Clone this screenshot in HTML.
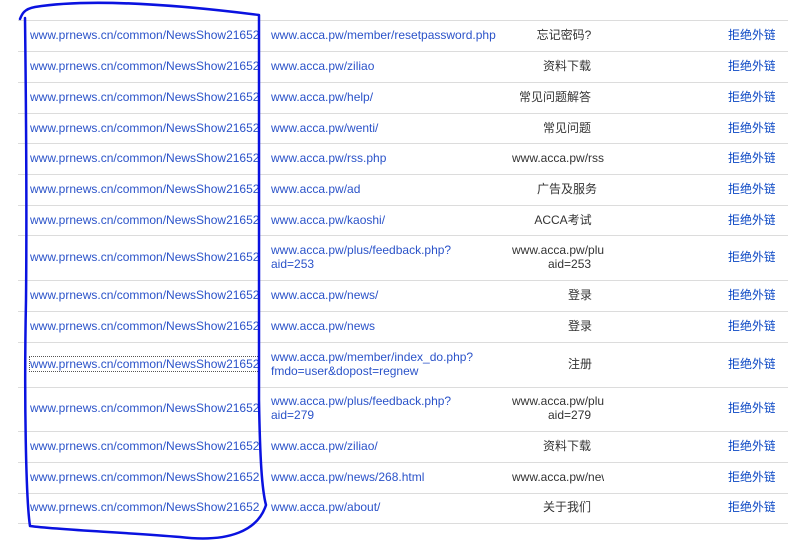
<!DOCTYPE html>
<html><head><meta charset="utf-8"><style>
body{margin:0;width:808px;height:543px;background:#fff;position:relative;overflow:hidden;font-family:"Liberation Sans","Noto Sans CJK SC",sans-serif;font-size:12px}
.l{position:absolute;left:18px;width:770px;height:1px;background:#dcdcdc}
.t{position:absolute;white-space:nowrap;line-height:14px}
.a{color:#2b53c9}
.k{color:#333}
.c3{position:absolute;left:512px;width:92px;overflow:hidden;text-align:center;color:#333;line-height:14px}
.c4{position:absolute;left:728px;width:47px;overflow:hidden;white-space:nowrap;color:#0b47c4;font-size:12px;line-height:14px}
</style></head><body>
<div class="l" style="top:20px"></div><div class="l" style="top:51px"></div><div class="l" style="top:82px"></div><div class="l" style="top:113px"></div><div class="l" style="top:143px"></div><div class="l" style="top:174px"></div><div class="l" style="top:205px"></div><div class="l" style="top:235px"></div><div class="l" style="top:280px"></div><div class="l" style="top:311px"></div><div class="l" style="top:342px"></div><div class="l" style="top:387px"></div><div class="l" style="top:431px"></div><div class="l" style="top:462px"></div><div class="l" style="top:493px"></div><div class="l" style="top:523px"></div>

<div class="t a" style="left:30px;top:28px">www.prnews.cn/common/NewsShow21652</div>
<div class="t a" style="left:30px;top:59px">www.prnews.cn/common/NewsShow21652</div>
<div class="t a" style="left:30px;top:90px">www.prnews.cn/common/NewsShow21652</div>
<div class="t a" style="left:30px;top:121px">www.prnews.cn/common/NewsShow21652</div>
<div class="t a" style="left:30px;top:151px">www.prnews.cn/common/NewsShow21652</div>
<div class="t a" style="left:30px;top:182px">www.prnews.cn/common/NewsShow21652</div>
<div class="t a" style="left:30px;top:213px">www.prnews.cn/common/NewsShow21652</div>
<div class="t a" style="left:30px;top:250px">www.prnews.cn/common/NewsShow21652</div>
<div class="t a" style="left:30px;top:288px">www.prnews.cn/common/NewsShow21652</div>
<div class="t a" style="left:30px;top:319px">www.prnews.cn/common/NewsShow21652</div>
<div class="t a" style="left:30px;top:357px;outline:1px dotted #555">www.prnews.cn/common/NewsShow21652</div>
<div class="t a" style="left:30px;top:401px">www.prnews.cn/common/NewsShow21652</div>
<div class="t a" style="left:30px;top:439px">www.prnews.cn/common/NewsShow21652</div>
<div class="t a" style="left:30px;top:470px">www.prnews.cn/common/NewsShow21652</div>
<div class="t a" style="left:30px;top:500px">www.prnews.cn/common/NewsShow21652</div>

<div class="t a" style="left:271px;top:28px">www.acca.pw/member/resetpassword.php</div>
<div class="t a" style="left:271px;top:59px">www.acca.pw/ziliao</div>
<div class="t a" style="left:271px;top:90px">www.acca.pw/help/</div>
<div class="t a" style="left:271px;top:121px">www.acca.pw/wenti/</div>
<div class="t a" style="left:271px;top:151px">www.acca.pw/rss.php</div>
<div class="t a" style="left:271px;top:182px">www.acca.pw/ad</div>
<div class="t a" style="left:271px;top:213px">www.acca.pw/kaoshi/</div>
<div class="t a" style="left:271px;top:243px">www.acca.pw/plus/feedback.php?<br>aid=253</div>
<div class="t a" style="left:271px;top:288px">www.acca.pw/news/</div>
<div class="t a" style="left:271px;top:319px">www.acca.pw/news</div>
<div class="t a" style="left:271px;top:350px">www.acca.pw/member/index_do.php?<br>fmdo=user&amp;dopost=regnew</div>
<div class="t a" style="left:271px;top:394px">www.acca.pw/plus/feedback.php?<br>aid=279</div>
<div class="t a" style="left:271px;top:439px">www.acca.pw/ziliao/</div>
<div class="t a" style="left:271px;top:470px">www.acca.pw/news/268.html</div>
<div class="t a" style="left:271px;top:500px">www.acca.pw/about/</div>

<div class="c3" style="top:28px;left:518px">忘记密码?</div>
<div class="c3" style="top:59px;left:521px">资料下载</div>
<div class="c3" style="top:90px;left:509px">常见问题解答</div>
<div class="c3" style="top:121px;left:521px">常见问题</div>
<div class="c3" style="top:151px;text-align:left">www.acca.pw/rss</div>
<div class="c3" style="top:182px;left:521px">广告及服务</div>
<div class="c3" style="top:213px;left:517px">ACCA考试</div>
<div class="c3" style="top:243px;white-space:nowrap;text-align:left">www.acca.pw/plu<br><span style="margin-left:36px">aid=253</span></div>
<div class="c3" style="top:288px;left:534px">登录</div>
<div class="c3" style="top:319px;left:534px">登录</div>
<div class="c3" style="top:357px;left:534px">注册</div>
<div class="c3" style="top:394px;white-space:nowrap;text-align:left">www.acca.pw/plu<br><span style="margin-left:36px">aid=279</span></div>
<div class="c3" style="top:439px;left:521px">资料下载</div>
<div class="c3" style="top:470px;white-space:nowrap;text-align:left">www.acca.pw/news</div>
<div class="c3" style="top:500px;left:521px">关于我们</div>

<div class="c4" style="top:28px">拒绝外链</div>
<div class="c4" style="top:59px">拒绝外链</div>
<div class="c4" style="top:90px">拒绝外链</div>
<div class="c4" style="top:121px">拒绝外链</div>
<div class="c4" style="top:151px">拒绝外链</div>
<div class="c4" style="top:182px">拒绝外链</div>
<div class="c4" style="top:213px">拒绝外链</div>
<div class="c4" style="top:250px">拒绝外链</div>
<div class="c4" style="top:288px">拒绝外链</div>
<div class="c4" style="top:319px">拒绝外链</div>
<div class="c4" style="top:357px">拒绝外链</div>
<div class="c4" style="top:401px">拒绝外链</div>
<div class="c4" style="top:439px">拒绝外链</div>
<div class="c4" style="top:470px">拒绝外链</div>
<div class="c4" style="top:500px">拒绝外链</div>

<svg style="position:absolute;left:0;top:0" width="808" height="543"><path d="M20 19 C22 14 24 9 35 7 C90 -2 180 5 259 15 C260 120 258 300 259 400 C260 460 262 490 266 505 C258 530 230 543 180 537 C120 532 60 530 30 526 C26 500 24 400 26 300 C27 200 26 100 25 18" fill="none" stroke="#0a12e0" stroke-width="2.5" stroke-linejoin="round" stroke-linecap="round"/></svg>
</body></html>
